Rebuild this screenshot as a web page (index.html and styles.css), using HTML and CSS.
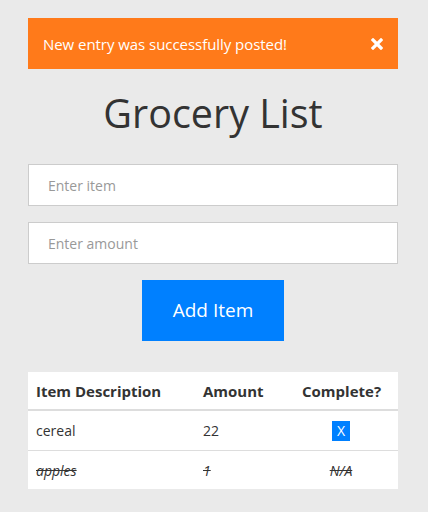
FILE: index.html
```html
<!DOCTYPE html>
<html>
<head>
<meta charset="utf-8">
<link rel="stylesheet" href="styles.css">
</head>
<body>
<div class="wrap">
  <div class="alert">
    <span class="alert-text">New entry was successfully posted!</span>
    <svg class="close" width="12" height="12" viewBox="0 0 12 12"><path d="M2 2 L10 10 M10 2 L2 10" stroke="#fff" stroke-width="3.2" stroke-linecap="square"/></svg>
  </div>
  <h1 class="title">Grocery List</h1>
  <div class="field"><span class="ph">Enter item</span></div>
  <div class="field"><span class="ph">Enter amount</span></div>
  <div class="btn-row"><div class="btn">Add Item</div></div>
  <table class="list">
    <thead>
      <tr><th class="c1">Item Description</th><th class="c2">Amount</th><th class="c3">Complete?</th></tr>
    </thead>
    <tbody>
      <tr><td class="c1">cereal</td><td class="c2">22</td><td class="c3 mid"><span class="xbtn">X</span></td></tr>
      <tr class="done"><td class="c1">apples</td><td class="c2">1</td><td class="c3 mid">N/A</td></tr>
    </tbody>
  </table>
</div>
</body>
</html>
```
FILE: styles.css
```css
html, body { margin: 0; padding: 0; }
body { background: #eaeaea; font-family: "Open Sans", "Liberation Sans", sans-serif; color: #333; }
.wrap { width: 370px; margin: 0 0 0 28px; padding-top: 18px; }
.alert { background: #ff7a1a; height: 51px; display: flex; align-items: center; justify-content: space-between; padding: 0 15px 0 15px; box-sizing: border-box; }
.alert-text { color: #fff; font-size: 15px; letter-spacing: -0.05px; }
.close { display: block; }
.title { margin: 19px 0 0 0; font-weight: 400; font-size: 39.5px; line-height: 50px; text-align: center; color: #333; }
.field { margin-top: 26px; height: 42px; background: #fff; border: 1px solid #ccc; box-sizing: border-box; display: flex; align-items: center; padding-left: 19px; }
.field + .field { margin-top: 16px; }
.ph { color: #999; font-size: 14px; }
.btn-row { display: flex; justify-content: center; margin-top: 16px; }
.btn { width: 142px; height: 61px; background: #0080ff; color: #fff; font-size: 19px; display: flex; align-items: center; justify-content: center; padding-bottom: 1px; box-sizing: border-box; }
.list { margin-top: 31px; width: 370px; border-collapse: collapse; background: #fff; font-size: 14px; }
.list th { text-align: left; font-weight: 700; font-size: 15px; height: 37px; padding: 0 8px; border-bottom: 2px solid #ddd; vertical-align: middle; }
.list td { height: 38px; padding: 0 8px; border-top: 1px solid #ddd; vertical-align: middle; }
.list tbody tr:first-child td { border-top: 0; height: 39px; }
.c1 { width: 151px; }
.c2 { width: 83px; }
.list td.mid { text-align: center; padding-right: 18px; }
.xbtn { display: inline-block; background: #0080ff; color: #fff; width: 18px; height: 20px; line-height: 20px; text-align: center; font-size: 14px; }
.done td { font-style: italic; text-decoration: line-through; }
```
